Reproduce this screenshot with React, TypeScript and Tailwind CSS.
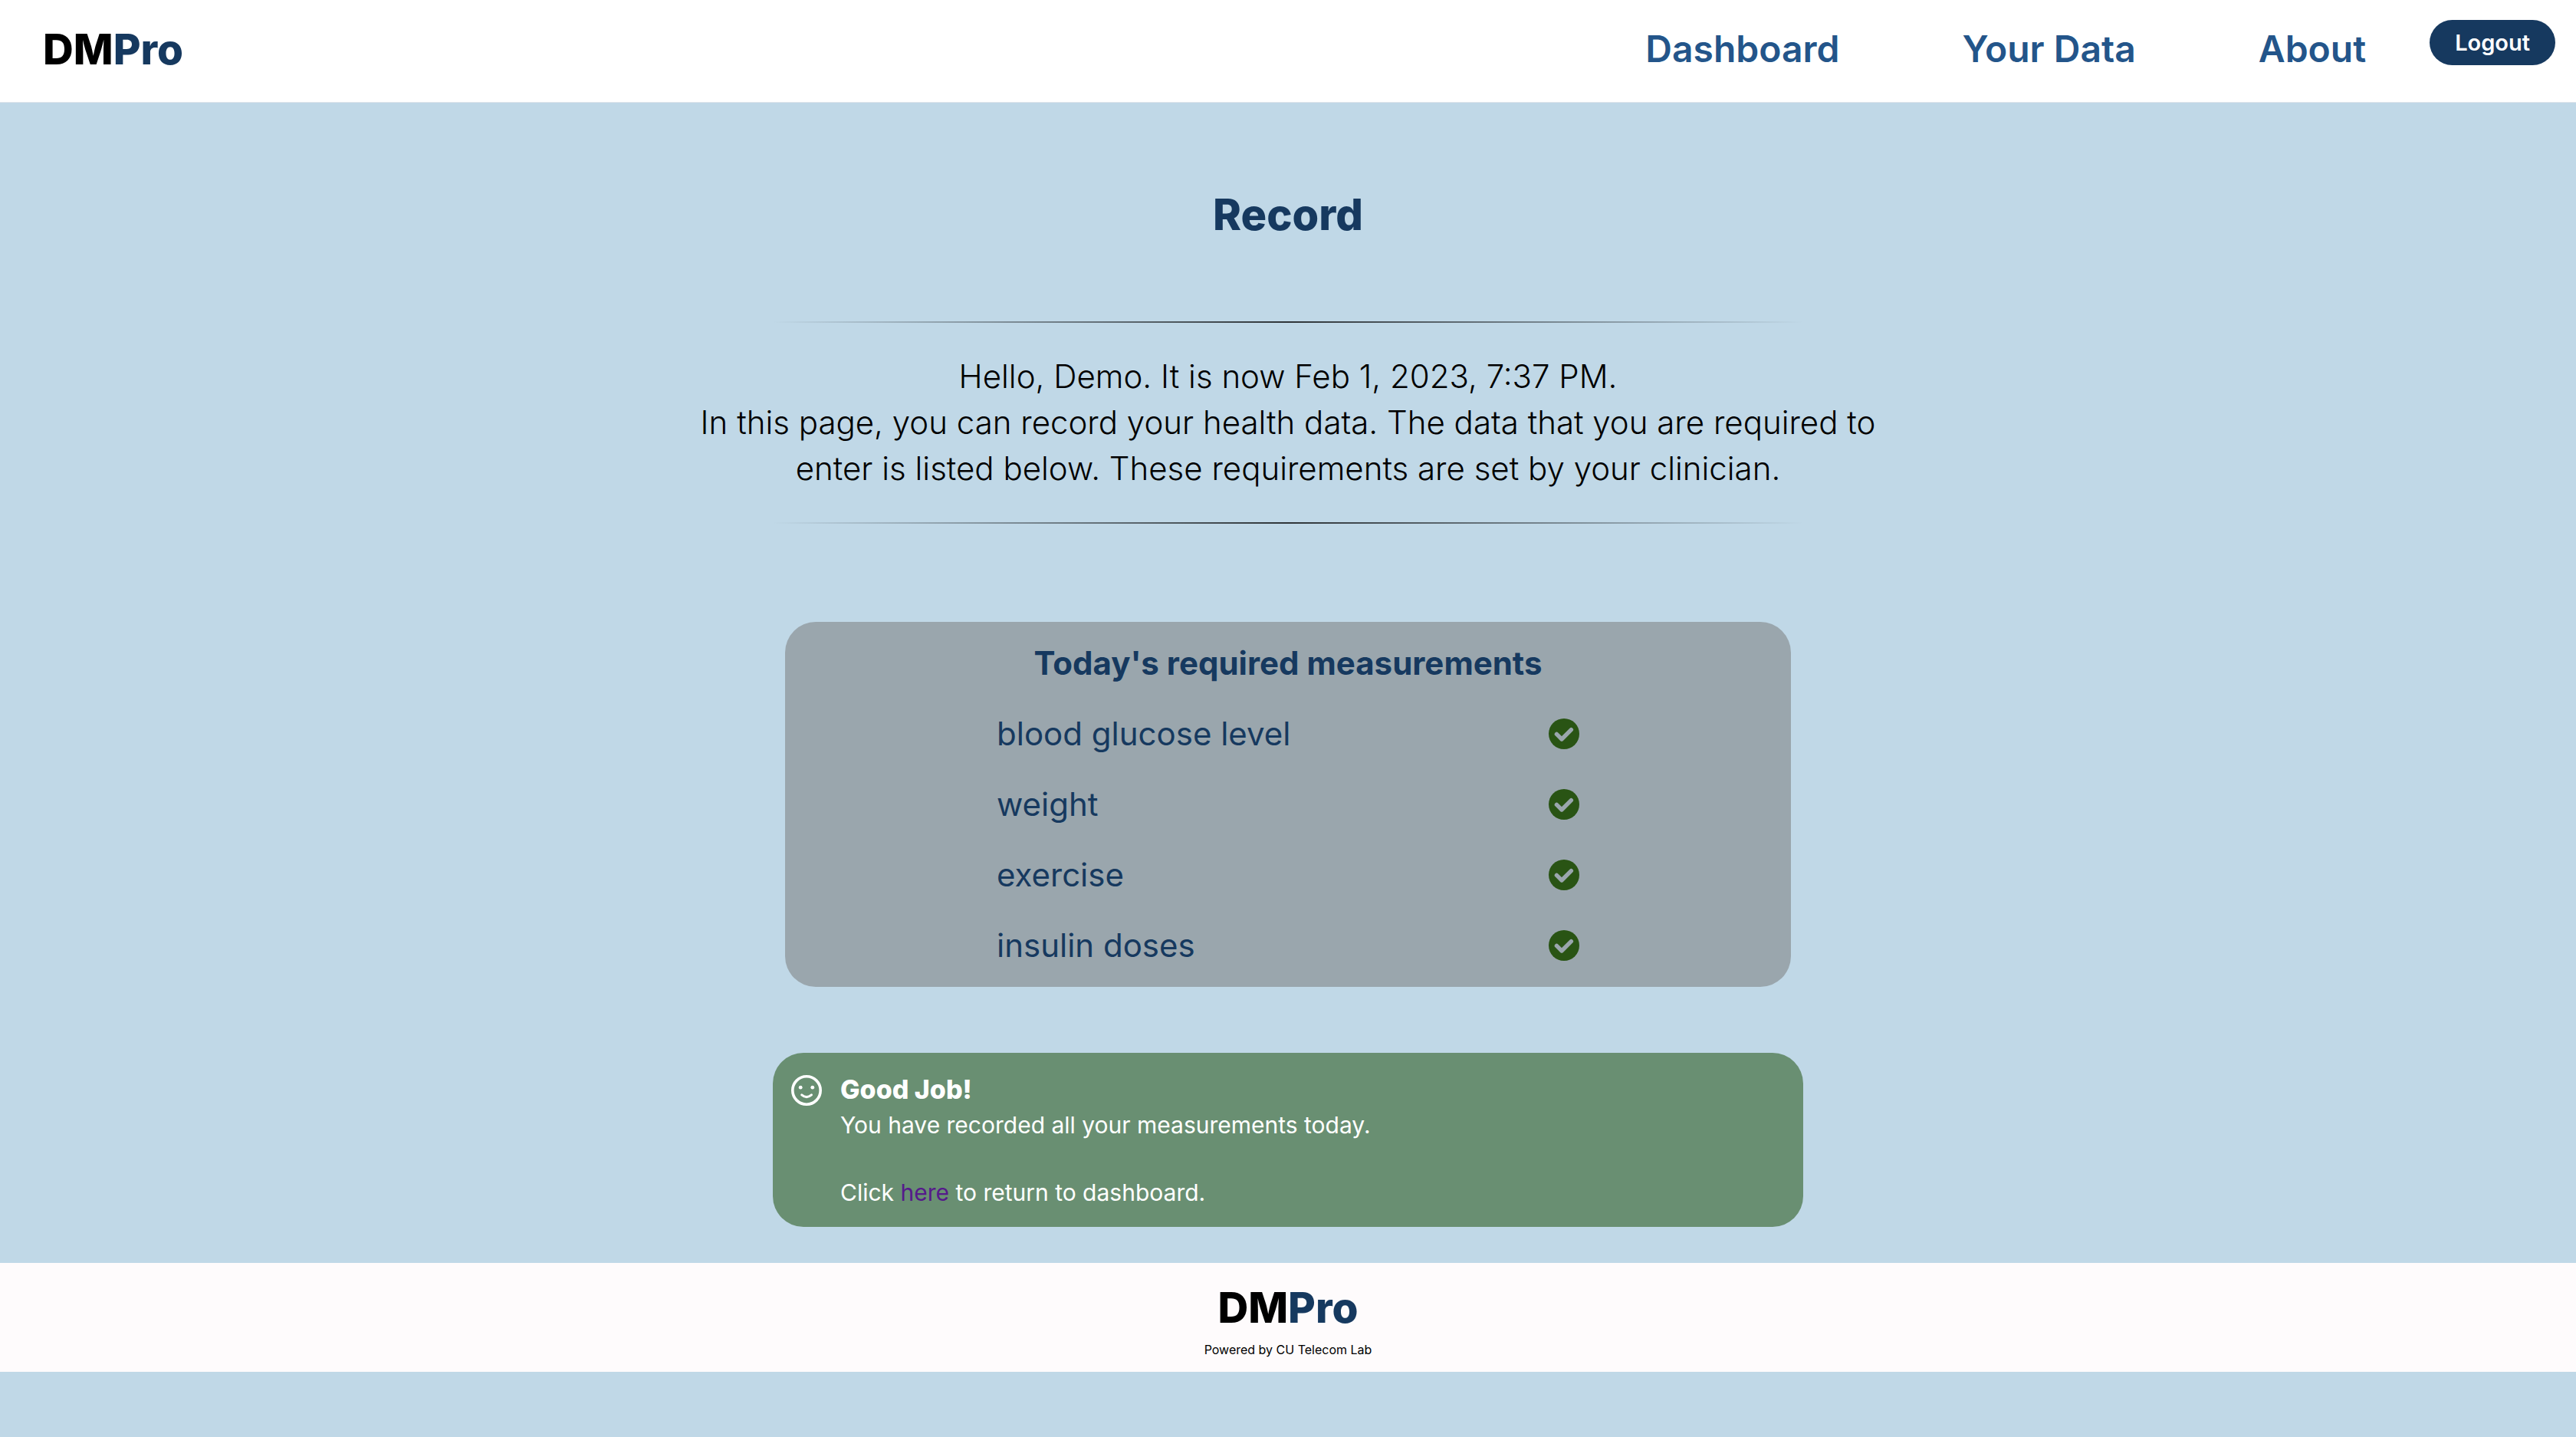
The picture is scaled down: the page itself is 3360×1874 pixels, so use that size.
import React from "react";

const navLinks = ["Dashboard", "Your Data", "About"];
const measurements = ["blood glucose level", "weight", "exercise", "insulin doses"];

function Logo() {
  return (
    <>
      <span className="text-black">DM</span>
      <span className="text-[#16395f]">Pro</span>
    </>
  );
}

function CheckIcon() {
  return (
    <svg viewBox="0 0 40 40" className="size-10 shrink-0" role="img" aria-label="Recorded">
      <circle cx="20" cy="20" r="20" fill="#295414" />
      <path
        d="M10.4 20.4L17 27L29.4 14.6"
        fill="none"
        stroke="#9aa6ad"
        strokeWidth="5.4"
        strokeLinecap="round"
        strokeLinejoin="round"
      />
    </svg>
  );
}

function SmileIcon() {
  return (
    <svg viewBox="0 0 40 40" className="size-10 shrink-0" aria-hidden="true">
      <circle cx="20" cy="20" r="18.2" fill="none" stroke="white" strokeWidth="3.6" />
      <circle cx="12.2" cy="16.2" r="2.4" fill="white" />
      <circle cx="27.8" cy="16.2" r="2.4" fill="white" />
      <path
        d="M13.8 25.9Q20 31.3 26.4 25.9"
        fill="none"
        stroke="white"
        strokeWidth="3.2"
        strokeLinecap="round"
      />
    </svg>
  );
}

function Rule() {
  return <hr className="h-0.5 w-2/5 border-0 bg-linear-to-r from-transparent via-[#2e3438] to-transparent" />;
}

export default function App() {
  return (
    <div className="flex min-h-screen flex-col bg-[#c0d8e7] font-['Inter',sans-serif]">
      <header className="flex items-center border-b border-[#dce3ea] bg-white pt-[26px] pr-[27px] pb-[31px] pl-14">
        <a href="#" className="text-[55px] leading-[76px] font-extrabold">
          <Logo />
        </a>
        <nav className="mr-[83px] ml-auto flex gap-40">
          {navLinks.map((label) => (
            <a key={label} href="#" className="text-[48px] leading-[76px] font-semibold text-[#23558a]">
              {label}
            </a>
          ))}
        </nav>
        <button
          type="button"
          className="self-start rounded-full bg-[#16395f] px-[33px] text-[29px] leading-[59px] font-semibold text-white"
        >
          Logout
        </button>
      </header>

      <main className="flex flex-col items-center">
        <h1 className="mt-[104px] mb-[97px] text-[56px] leading-[84px] font-extrabold text-[#16395f]">Record</h1>
        <Rule />
        <p className="max-w-[1600px] py-10 text-center text-[42px] leading-[60px] font-light text-black">
          Hello, Demo. It is now Feb 1, 2023, 7:37 PM.
          <br />
          In this page, you can record your health data. The data that you are required to enter is listed below.
          These requirements are set by your clinician.
        </p>
        <Rule />

        <div className="mt-32 flex w-2/5 flex-col px-4">
          <section className="flex flex-col items-center rounded-[40px] bg-[#9aa6ad] py-2 text-[42px] leading-[60px] text-[#16395f]">
            <h2 className="py-4 font-bold">Today's required measurements</h2>
            <ul className="w-[760px] max-w-full">
              {measurements.map((name) => (
                <li key={name} className="flex items-center justify-between py-4">
                  {name}
                  <CheckIcon />
                </li>
              ))}
            </ul>
          </section>
        </div>

        <section className="mt-[86px] mb-[47px] flex w-2/5 gap-6 rounded-[40px] bg-[#698f72] px-6 pt-6 pb-[23px] text-white">
          <div className="pt-[5px]">
            <SmileIcon />
          </div>
          <div className="text-[30px] leading-[44px]">
            <h2 className="text-[34px] leading-[48px] font-extrabold">Good Job!</h2>
            <p>You have recorded all your measurements today.</p>
            <br />
            <p>
              Click{" "}
              <a href="#" className="text-[#551a8b]">
                here
              </a>{" "}
              to return to dashboard.
            </p>
          </div>
        </section>
      </main>

      <footer className="bg-[#fefbfc] py-4 text-center">
        <div className="text-[55px] leading-[84px] font-extrabold">
          <Logo />
        </div>
        <p className="text-[16px] leading-[26px] text-black">Powered by CU Telecom Lab</p>
      </footer>
    </div>
  );
}
